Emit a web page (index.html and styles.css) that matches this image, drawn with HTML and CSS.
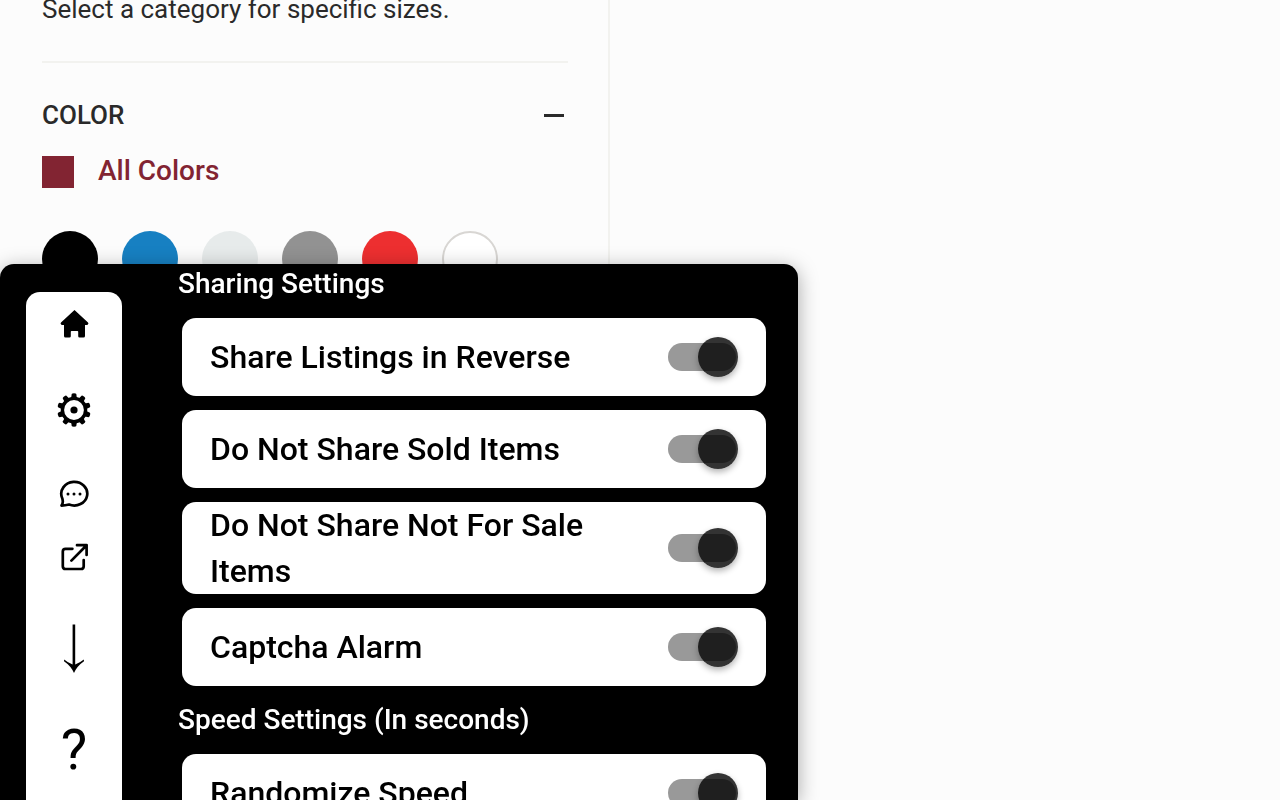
FILE: index.html
```html
<!DOCTYPE html>
<html lang="en">
<head>
  <meta charset="UTF-8" />
  <meta name="viewport" content="width=device-width, initial-scale=1.0" />
  <title>Sharing Settings</title>
  <link rel="stylesheet" href="styles.css">
</head>
<body>
  <aside class="filters">
    <p class="size-hint">Select a category for specific sizes.</p>

    <section class="color-filter">
      <div class="filter-header">
        <h2>COLOR</h2>
        <button class="collapse" aria-label="Collapse color filter"><span></span></button>
      </div>
      <a href="#" class="all-colors"><span class="square"></span>All Colors</a>
      <div class="swatches">
        <button class="swatch black" aria-label="Black"></button>
        <button class="swatch blue" aria-label="Blue"></button>
        <button class="swatch silver" aria-label="Silver"></button>
        <button class="swatch gray" aria-label="Gray"></button>
        <button class="swatch red" aria-label="Red"></button>
        <button class="swatch white" aria-label="White"></button>
      </div>
    </section>
  </aside>

  <div class="panel">
    <nav class="menu">
      <button class="home" aria-label="Home">
        <svg width="30" height="30" viewBox="0 0 30 30">
          <path d="M15.5 1 L29 13.4 Q30 14.6 28.8 15.6 L28.2 16 H26 V27 Q26 28.6 24.5 28.6 H20.6 Q19.2 28.6 19.2 27.2 V22.8 Q19.2 22 18.5 22 H12.5 Q11.8 22 11.8 22.8 V27.2 Q11.8 28.6 10.4 28.6 H6.5 Q5 28.6 5 27 V16 H2.8 L2.2 15.6 Q1 14.6 2 13.4 Z" />
        </svg>
      </button>
      <button class="gear" aria-label="Settings">
        <svg width="34" height="34" viewBox="-17 -17 34 34">
          <g id="teeth">
            <path id="tooth" d="M-3 -11 L-2.3 -16 Q-2 -16.8 0 -16.8 Q2 -16.8 2.3 -16 L3 -11 Z" />
            <use href="#tooth" transform="rotate(36)" />
            <use href="#tooth" transform="rotate(72)" />
            <use href="#tooth" transform="rotate(108)" />
            <use href="#tooth" transform="rotate(144)" />
          </g>
          <use href="#teeth" transform="rotate(180)" />
          <circle r="11.6" fill="none" stroke="#000" stroke-width="3.4" />
          <circle r="3.6" />
        </svg>
      </button>
      <button class="chat" aria-label="Messages">
        <svg width="30" height="28" viewBox="0 0 30 28">
          <path d="M2.9 17.3 A13 11.8 0 1 1 10.1 24.5 Q6 25.6 2.5 25.6 Q4.9 22.2 2.9 17.3 Z" fill="none" stroke="#000" stroke-width="2.7" stroke-linejoin="round" />
          <circle cx="9" cy="14" r="1.5" />
          <circle cx="15" cy="14" r="1.5" />
          <circle cx="21" cy="14" r="1.5" />
        </svg>
      </button>
      <button class="open" aria-label="Open in new tab">
        <svg width="28" height="28" viewBox="0 0 28 28" fill="none" stroke="#000" stroke-width="2.7" stroke-linecap="round" stroke-linejoin="round">
          <path d="M12.4 5.8 H5.5 Q2.8 5.8 2.8 8.6 V23.2 Q2.8 26 5.5 26 H21 Q23.7 26 23.7 23.2 V17" />
          <path d="M17 2.2 H26.6 V12 M26.6 2.2 L11.4 17.6" />
        </svg>
      </button>
      <button class="down" aria-label="Scroll down">
        <svg width="22" height="50" viewBox="0 0 22 50">
          <path d="M9.6 .5 H12.2 V40.4 Q17 38.6 20.8 35.4 L21 37.2 Q14 42 11 49 Q8 42 1 37.2 L1.2 35.4 Q4.8 38.6 9.6 40.4 Z" />
        </svg>
      </button>
      <button class="help" aria-label="Help">?</button>
    </nav>

    <main class="settings">
      <h3>Sharing Settings</h3>
      <label class="setting">
        <span>Share Listings in Reverse</span>
        <input type="checkbox" class="toggle" checked>
      </label>
      <label class="setting">
        <span>Do Not Share Sold Items</span>
        <input type="checkbox" class="toggle" checked>
      </label>
      <label class="setting">
        <span>Do Not Share Not For Sale Items</span>
        <input type="checkbox" class="toggle" checked>
      </label>
      <label class="setting">
        <span>Captcha Alarm</span>
        <input type="checkbox" class="toggle" checked>
      </label>

      <h3>Speed Settings (In seconds)</h3>
      <label class="setting">
        <span>Randomize Speed</span>
        <input type="checkbox" class="toggle" checked>
      </label>
    </main>
  </div>
</body>
</html>
```

FILE: styles.css
```css
* {
  box-sizing: border-box;
}

body {
  margin: 0;
  min-height: 100vh;
  display: flex;
  font-family: Roboto, sans-serif;
  background-color: #fcfcfc;
  color: #2a2a2a;
  overflow: hidden;
}

h2, h3, p {
  margin: 0;
}

button {
  padding: 0;
  border: none;
  background: none;
  font-family: inherit;
  color: inherit;
  cursor: pointer;
}

/* filter sidebar */
.filters {
  width: 610px;
  padding: 0 40px 0 42px;
  border-right: 2px solid #f2f2ef;
}

.size-hint {
  height: 63px;
  font-size: 26px;
  line-height: 18px;
  border-bottom: 2px solid #f2f2ef;
}

.color-filter {
  padding-top: 32px;
}

.filter-header {
  display: flex;
  justify-content: space-between;
  align-items: center;
  height: 40px;
}

.filter-header h2 {
  font-size: 26px;
  font-weight: 500;
}

.collapse {
  width: 28px;
  height: 40px;
}

.collapse span {
  display: block;
  width: 20px;
  height: 3px;
  margin: auto;
  background-color: #2a2a2a;
}

.all-colors {
  display: flex;
  gap: 24px;
  height: 32px;
  margin-top: 21px;
  font-size: 28px;
  font-weight: 500;
  line-height: 30px;
  color: #822432;
  text-decoration: none;
}

.square {
  width: 32px;
  height: 32px;
  background-color: #822432;
}

.swatches {
  display: flex;
  gap: 24px;
  margin-top: 43px;
}

.swatch {
  width: 56px;
  height: 56px;
  border-radius: 50%;
}

.black { background-color: #000; }
.blue { background-color: #1780c2; }
.silver { background-color: #e7ebeb; }
.gray { background-color: #929292; }
.red { background-color: #ed2f30; }
.white {
  background-color: #fff;
  border: 2px solid #d8d6d3;
}

/* settings panel, pinned over the page */
.panel {
  position: fixed;
  top: 264px;
  bottom: 0;
  left: 0;
  width: 798px;
  display: flex;
  gap: 60px;
  padding: 0 32px 0 26px;
  background-color: #000;
  border-radius: 14px 14px 0 0;
  box-shadow: 0 4px 20px rgba(0, 0, 0, 0.35);
  overflow: hidden;
}

.menu {
  flex: none;
  display: flex;
  flex-direction: column;
  width: 96px;
  margin-top: 28px;
  background-color: #fff;
  border-radius: 14px 14px 0 0;
  color: #000;
}

.menu button {
  flex: none;
  display: flex;
  align-items: center;
  justify-content: center;
}

.home { height: 64px; }
.gear { height: 108px; }
.chat { height: 60px; }
.open { height: 66px; }
.down { height: 118px; }

.help {
  height: 84px;
  font-size: 56px;
}

.settings {
  flex: 1;
  display: flex;
  flex-direction: column;
  gap: 14px;
}

.settings h3 {
  margin-left: -4px;
  font-size: 28px;
  font-weight: 500;
  line-height: 40px;
  color: #fff;
}

.setting {
  flex: none;
  display: flex;
  align-items: center;
  justify-content: space-between;
  min-height: 78px;
  padding: 0 28px;
  background-color: #fff;
  border-radius: 14px;
  color: #000;
  font-size: 32px;
  font-weight: 500;
  line-height: 46px;
  cursor: pointer;
}

.setting span {
  max-width: 400px;
}

.toggle {
  appearance: none;
  flex: none;
  position: relative;
  width: 70px;
  height: 40px;
  margin: 0;
  cursor: pointer;
}

.toggle::before {
  content: "";
  position: absolute;
  top: 6px;
  left: 0;
  width: 68px;
  height: 28px;
  border-radius: 14px;
  background-color: #999;
}

.toggle::after {
  content: "";
  position: absolute;
  top: 0;
  left: 0;
  width: 40px;
  height: 40px;
  border-radius: 50%;
  background-color: rgba(0, 0, 0, 0.8);
  box-shadow: 0 3px 6px rgba(0, 0, 0, 0.3);
}

.toggle:checked::after {
  left: 30px;
}
```
